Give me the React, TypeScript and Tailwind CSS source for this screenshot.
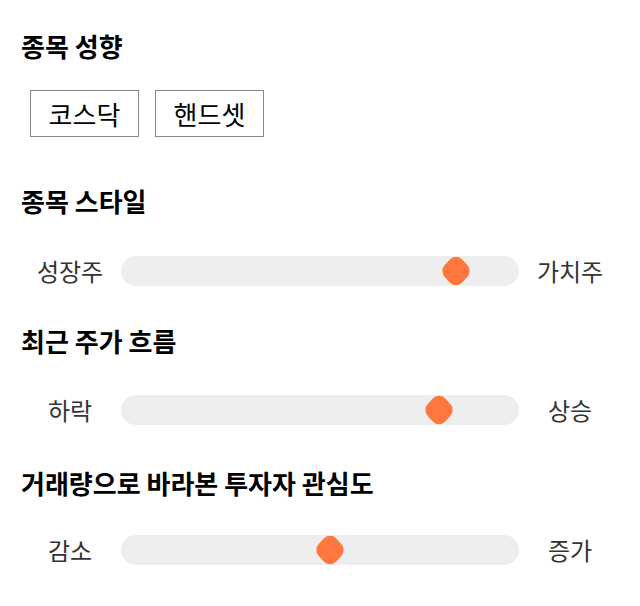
import React from "react";

const font = { fontFamily: '"Noto Sans CJK KR", "Noto Sans", sans-serif' };

function Heading({ children, className }: { children: React.ReactNode; className: string }) {
  return (
    <div className={`h-[32px] flex items-center text-[26px] font-bold text-black leading-none ${className}`}>
      {children}
    </div>
  );
}

function SliderRow({
  left,
  right,
  thumbClass,
  className,
}: {
  left: string;
  right: string;
  thumbClass: string;
  className: string;
}) {
  return (
    <div className={`flex items-center ml-[7px] h-[30px] ${className}`}>
      <div className="w-[84px] text-center text-[24px] text-[#333333] leading-none whitespace-nowrap">{left}</div>
      <div className="relative ml-[9px] w-[398px] h-[30px] rounded-full bg-[#eeeeee]">
        <div className={`absolute top-0 w-[29px] h-[30px] flex items-center justify-center scale-y-[1.05] ${thumbClass}`}>
          <div className="w-[24px] h-[24px] shrink-0 rotate-45 rounded-[8px] bg-[#ff763e]" />
        </div>
      </div>
      <div className="ml-[9px] w-[84px] text-center text-[24px] text-[#333333] leading-none whitespace-nowrap">{right}</div>
    </div>
  );
}

export default function App() {
  return (
    <div className="w-[640px] h-[606px] bg-white pl-[21px] pt-[30px] flex flex-col" style={font}>
      <Heading className="">종목 성향</Heading>
      <div className="flex mt-[28px] ml-[9px] gap-[16px]">
        <div className="w-[109px] h-[47px] border border-[#888888] flex items-center justify-center text-[26px] text-black leading-none">
          코스닥
        </div>
        <div className="w-[109px] h-[47px] border border-[#888888] flex items-center justify-center text-[26px] text-black leading-none">
          핸드셋
        </div>
      </div>
      <Heading className="mt-[48px]">종목 스타일</Heading>
      <SliderRow className="mt-[39px]" left="성장주" right="가치주" thumbClass="left-[320px]" />
      <Heading className="mt-[39px]">최근 주가 흐름</Heading>
      <SliderRow className="mt-[38px]" left="하락" right="상승" thumbClass="left-[303px]" />
      <Heading className="mt-[42px]">거래량으로 바라본 투자자 관심도</Heading>
      <SliderRow className="mt-[36px]" left="감소" right="증가" thumbClass="left-[194px]" />
    </div>
  );
}
